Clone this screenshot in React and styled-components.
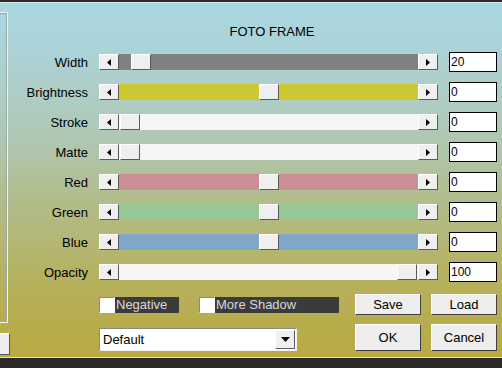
import styled, { createGlobalStyle } from "styled-components";

const GlobalStyle = createGlobalStyle`
  html, body { margin: 0; padding: 0; }
  body { font-family: "Liberation Sans", Arial, sans-serif; }
`;

const sliders = [
  { label: "Width", value: "20", track: "#808080", thumb: 12 },
  { label: "Brightness", value: "0", track: "#cdc832", thumb: 140 },
  { label: "Stroke", value: "0", track: "#f6f6f6", thumb: 1 },
  { label: "Matte", value: "0", track: "#f6f6f6", thumb: 1 },
  { label: "Red", value: "0", track: "#cb8e95", thumb: 140 },
  { label: "Green", value: "0", track: "#96c795", thumb: 140 },
  { label: "Blue", value: "0", track: "#80a7c7", thumb: 140 },
  { label: "Opacity", value: "100", track: "#f6f6f6", thumb: 278 },
];

function Arrow({ dir }) {
  return (
    <svg width="4" height="7" viewBox="0 0 4 7">
      {dir === "left" ? (
        <polygon points="4,0 0,3.5 4,7" fill="#000" />
      ) : (
        <polygon points="0,0 4,3.5 0,7" fill="#000" />
      )}
    </svg>
  );
}

function App() {
  return (
    <Window>
      <GlobalStyle />
      <TopBar />
      <Body>
        <Stub>
          <StubGroup />
          <StubButton />
        </Stub>
        <Main>
          <Title>FOTO FRAME</Title>
          <Rows>
            {sliders.map((s) => (
              <Row key={s.label}>
                <Label>{s.label}</Label>
                <Scroll>
                  <ArrowBtn>
                    <Arrow dir="left" />
                  </ArrowBtn>
                  <Track $color={s.track}>
                    <Thumb style={{ left: s.thumb }} />
                  </Track>
                  <ArrowBtn>
                    <Arrow dir="right" />
                  </ArrowBtn>
                </Scroll>
                <ValueBox>{s.value}</ValueBox>
              </Row>
            ))}
          </Rows>
          <Footer>
            <LeftCol>
              <Checks>
                <Check $width={80}>
                  <Box />
                  <CheckText>Negative</CheckText>
                </Check>
                <Check $width={140}>
                  <Box />
                  <CheckText>More Shadow</CheckText>
                </Check>
              </Checks>
              <Select>
                <SelectText>Default</SelectText>
                <SelectBtn>
                  <svg width="9" height="5" viewBox="0 0 9 5">
                    <polygon points="0,0 9,0 4.5,5" fill="#000" />
                  </svg>
                </SelectBtn>
              </Select>
            </LeftCol>
            <Buttons>
              <Button>Save</Button>
              <Button>Load</Button>
              <Button $tall>OK</Button>
              <Button $tall>Cancel</Button>
            </Buttons>
          </Footer>
        </Main>
      </Body>
      <BottomBar />
    </Window>
  );
}

const Window = styled.div`
  width: 502px;
  height: 368px;
  display: flex;
  flex-direction: column;
  overflow: hidden;
  background: linear-gradient(
    #a9d8e2 0%,
    #acd2d6 15%,
    #afc7b2 38%,
    #b2bc8a 55%,
    #b6b05a 78%,
    #b9a93e 100%
  );
`;

const TopBar = styled.div`
  height: 3px;
  background: #2c2c2c;
  border-bottom: 1px solid #d6e8ec;
  box-sizing: border-box;
`;

const Body = styled.div`
  flex: 1;
  display: flex;
`;

const Stub = styled.div`
  width: 10px;
  display: flex;
  flex-direction: column;
  padding-top: 9px;
`;

const StubGroup = styled.div`
  width: 8px;
  height: 311px;
  box-sizing: border-box;
  border: 1px solid #f4f4f0;
  border-left: none;
  box-shadow: inset -1px 1px 0 #98a8a0;
`;

const StubButton = styled.div`
  margin-top: 10px;
  width: 10px;
  height: 22px;
  box-sizing: border-box;
  background: #eeeeee;
  border-top: 1px solid #fff;
  border-right: 1px solid #555;
  border-bottom: 1px solid #555;
`;

const Main = styled.div`
  flex: 1;
  display: flex;
  flex-direction: column;
`;

const Title = styled.div`
  margin-top: 21px;
  padding-left: 32px;
  height: 16px;
  line-height: 16px;
  text-align: center;
  font-size: 13px;
  color: #000;
`;

const Rows = styled.div`
  margin-top: 12px;
  display: grid;
  row-gap: 10px;
`;

const Row = styled.div`
  display: grid;
  grid-template-columns: 78px 339px 48px;
  column-gap: 11px;
  align-items: center;
  height: 20px;
`;

const Label = styled.div`
  text-align: right;
  font-size: 13px;
  color: #000;
`;

const Scroll = styled.div`
  display: flex;
  height: 16px;
`;

const raised = `
  box-sizing: border-box;
  background: #efefef;
  border: 1px solid;
  border-color: #ffffff #5a5a5a #5a5a5a #ffffff;
`;

const ArrowBtn = styled.div`
  ${raised}
  width: 20px;
  height: 16px;
  display: flex;
  align-items: center;
  justify-content: center;
`;

const Track = styled.div`
  position: relative;
  flex: 1;
  background: ${(p) => p.$color};
`;

const Thumb = styled.div`
  ${raised}
  position: absolute;
  top: 0;
  width: 20px;
  height: 16px;
`;

const ValueBox = styled.div`
  box-sizing: border-box;
  height: 20px;
  border: 1px solid #000;
  background: #fff;
  font-size: 12px;
  line-height: 18px;
  padding-left: 1px;
  color: #000;
`;

const Footer = styled.div`
  margin-top: 12px;
  padding-left: 89px;
  display: flex;
`;

const LeftCol = styled.div`
  width: 256px;
  display: flex;
  flex-direction: column;
`;

const Checks = styled.div`
  height: 21px;
  display: flex;
  align-items: center;
  gap: 20px;
`;

const Check = styled.div`
  width: ${(p) => p.$width}px;
  height: 16px;
  display: flex;
`;

const Box = styled.div`
  width: 16px;
  height: 16px;
  box-sizing: border-box;
  background: #fff;
  border: 1px solid;
  border-color: #8a8a8a #ffffff #ffffff #8a8a8a;
`;

const CheckText = styled.div`
  flex: 1;
  background: #3b3b3b;
  color: #d8d8d8;
  font-size: 13px;
  line-height: 16px;
  padding-left: 1px;
`;

const Select = styled.div`
  margin-top: 13px;
  width: 198px;
  height: 23px;
  box-sizing: border-box;
  display: flex;
  background: #fff;
  border: 1px solid;
  border-color: #8a8a8a #f0f0f0 #f0f0f0 #8a8a8a;
`;

const SelectText = styled.div`
  flex: 1;
  font-size: 13px;
  line-height: 21px;
  padding-left: 3px;
  color: #000;
`;

const SelectBtn = styled.div`
  ${raised}
  width: 20px;
  height: 19px;
  margin: 1px;
  display: flex;
  align-items: center;
  justify-content: center;
`;

const Buttons = styled.div`
  display: grid;
  grid-template-columns: 66px 66px;
  grid-template-rows: 21px 27px;
  column-gap: 10px;
  row-gap: 9px;
`;

const Button = styled.div`
  ${raised}
  border-color: #ffffff #404040 #404040 #ffffff;
  display: flex;
  align-items: center;
  justify-content: center;
  font-size: 13px;
  color: #000;
  background: #eeeeee;
`;

const BottomBar = styled.div`
  height: 11px;
  box-sizing: border-box;
  background: #2a2a2a;
  border-top: 1px solid #e4e0c8;
`;

export default App;
